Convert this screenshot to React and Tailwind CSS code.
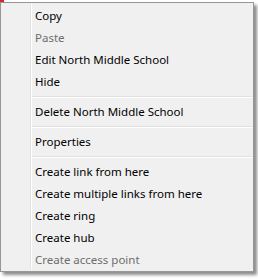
import React from "react";

const groups = [
  [
    { t: "Copy" },
    { t: "Paste", d: true },
    { t: "Edit North Middle School" },
    { t: "Hide" },
  ],
  [{ t: "Delete North Middle School" }],
  [{ t: "Properties" }],
  [
    { t: "Create link from here" },
    { t: "Create multiple links from here" },
    { t: "Create ring" },
    { t: "Create hub" },
    { t: "Create access point", d: true },
  ],
];

function Item({ t, d }) {
  return (
    <div
      className={`h-[22px] leading-[22px] pl-[34px] whitespace-nowrap ${d ? "text-[#6d6d6d]" : "text-black"}`}
    >
      {t}
    </div>
  );
}

export default function App() {
  return (
    <div
      className="w-[258px] h-[279px] bg-white relative overflow-hidden"
      style={{ fontFamily: '"Noto Sans", "Open Sans", sans-serif' }}
    >
      <div className="absolute left-0 top-0 w-[4px] h-[2px] bg-[#d9262b]" />
      <div className="pt-[2px]">
        <div className="relative w-[254px] border border-[#979797] bg-[#f0f0f0] pt-[2px] text-[11.5px] shadow-[3px_3px_3px_rgba(0,0,0,0.45)]">
          <div className="absolute left-[29px] top-[1px] bottom-[1px] w-[2px] border-l border-[#e2e3e3] bg-white" />
          {groups.map((g, i) => (
            <React.Fragment key={i}>
              {i > 0 && (
                <div className="h-[8px] flex items-center pl-[29px] pr-[1px]">
                  <div className="w-full h-[2px] border-t border-[#e0e0e0] bg-white" />
                </div>
              )}
              {g.map((it) => (
                <Item key={it.t} {...it} />
              ))}
            </React.Fragment>
          ))}
        </div>
      </div>
    </div>
  );
}
